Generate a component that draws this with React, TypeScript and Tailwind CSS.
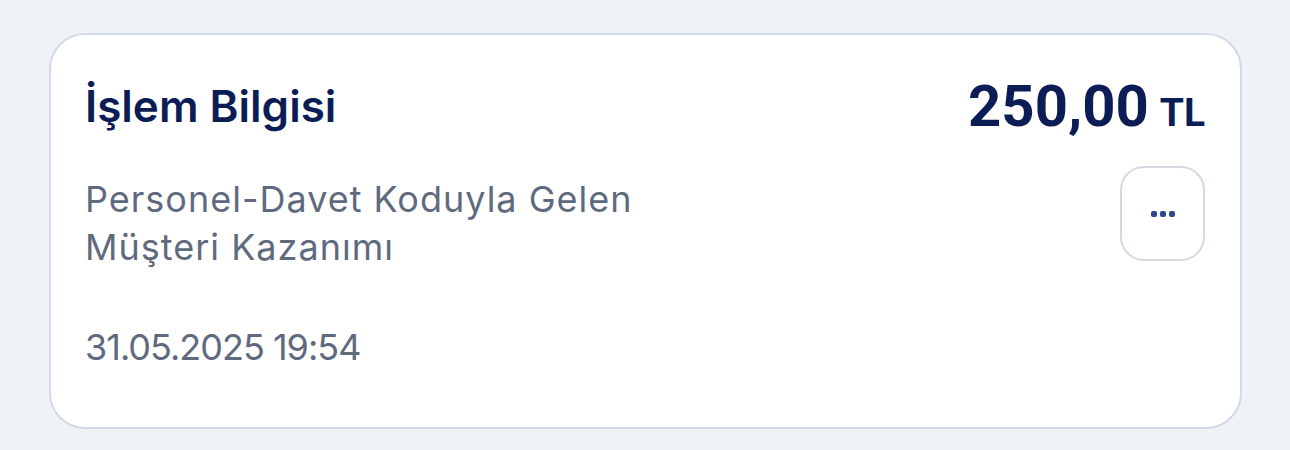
export default function App() {
  return (
    <div className="h-[450px] w-[1290px] bg-[#eff2f7] pt-[33px] pl-[49px] pr-[48px]">
      <div className="rounded-[36px] border-2 border-[#d4dae5] bg-white pl-[34px] pr-[35px] pt-[42px] pb-[56px]">
        {/* Header */}
        <div className="flex items-center justify-between">
          <h2 className="font-['Inter',sans-serif] text-[44px] font-semibold leading-[53px] text-[#0c1d56]">
            İşlem Bilgisi
          </h2>
          <div className="flex items-baseline font-['Roboto',sans-serif] font-bold leading-none text-[#0c1d56]">
            <span className="text-[58px]">250,00</span>
            <span className="ml-[11px] text-[39px]">TL</span>
          </div>
        </div>

        {/* Description + menu */}
        <div className="mt-[31px] flex items-start justify-between">
          <p className="mt-[9px] w-[600px] font-['Inter',sans-serif] text-[36px] leading-[48px] tracking-[1px] text-[#5f6a7f]">
            Personel-Davet Koduyla Gelen Müşteri Kazanımı
          </p>
          <button className="flex h-[95px] w-[85px] items-center justify-center gap-[3px] rounded-[24px] border-2 border-[#d4dae5] bg-white">
            <span className="h-[6px] w-[6px] rounded-[2px] bg-[#2a4796]" />
            <span className="h-[6px] w-[6px] rounded-[2px] bg-[#2a4796]" />
            <span className="h-[6px] w-[6px] rounded-[2px] bg-[#2a4796]" />
          </button>
        </div>

        {/* Date */}
        <p className="mt-[52px] font-['Inter',sans-serif] text-[36px] leading-[48px] tracking-[-1px] text-[#5f6a7f]">
          31.05.2025 19:54
        </p>
      </div>
    </div>
  );
}
